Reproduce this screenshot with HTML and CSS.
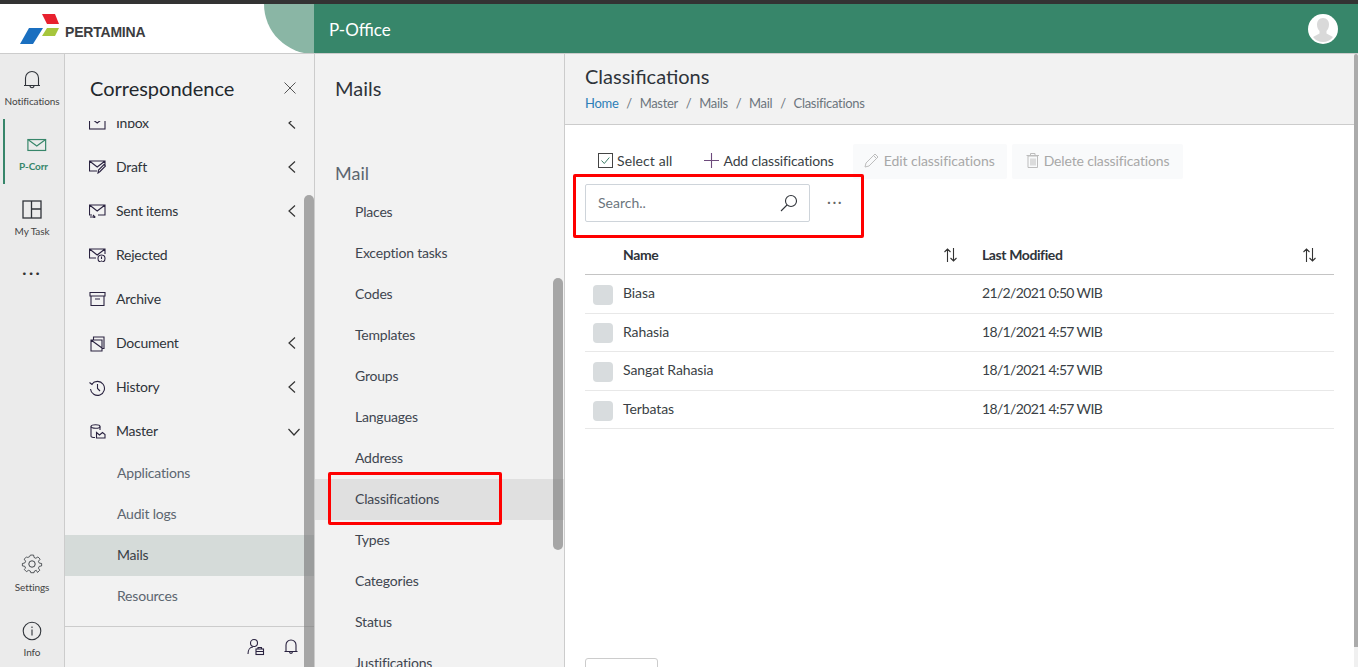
FILE: index.html
```html
<!doctype html>
<html lang="en">
  <head>
    <meta charset="UTF-8" />
    <meta name="viewport" content="width=device-width, initial-scale=1.0" />
    <title>P-Office</title>
    <link rel="stylesheet" href="styles.css">
  </head>

  <body>
    <div class="app">
      <header class="topbar">
        <div class="brand">
          <svg class="brand-logo" width="40" height="30" viewBox="0 0 40 30">
            <polygon points="22,0 35,0 39,10 27,10" fill="#e8212e" />
            <polygon points="9,14 23,14 13,30 0,30" fill="#1a6fc0" />
            <polygon points="27,14 39,14 35,22 22,22" fill="#a6c63c" />
          </svg>
          <span class="brand-name">PERTAMINA</span>
          <span class="brand-curve"></span>
        </div>
        <div class="appbar">
          <span class="app-name">P-Office</span>
          <span class="avatar">
            <svg width="30" height="30" viewBox="0 0 30 30">
              <path d="M15 4c-4 0-6 3-6 6.500 0 3 1 5 2.500 6.500v2.500L5 23c2.500 3.500 6 5 10 5s7.500-1.500 10-5l-6.500-3.500V17c1.500-1.500 2.500-3.500 2.500-6.500C21 7 19 4 15 4z" fill="#d9d9d9" />
            </svg>
          </span>
        </div>
      </header>

      <div class="body">
        <nav class="rail">
          <a class="rail-item">
            <svg width="18" height="20" viewBox="0 0 18 20" fill="none" stroke="#30343a" stroke-width="1.100">
              <path d="M2.500 15.500V8a6.500 6.500 0 0 1 13 0v7.500zM1 15.500h16M7 15.500c0 3 4 3 4 0" />
            </svg>
            <span>Notifications</span>
          </a>
          <a class="rail-item is-active">
            <svg width="20" height="14" viewBox="0 0 22 16" fill="none" stroke="#37866a" stroke-width="1.300">
              <rect x="1" y="2" width="19.500" height="12" />
              <path d="M1 2l9.750 7L20.500 2" />
            </svg>
            <span>P-Corr</span>
          </a>
          <a class="rail-item">
            <svg width="20" height="20" viewBox="0 0 20 20" fill="none" stroke="#30343a" stroke-width="1.300">
              <rect x="1" y="1" width="18" height="17" />
              <path d="M9.500 1v17M9.500 9H19" />
            </svg>
            <span>My Task</span>
          </a>
          <div class="rail-more">&middot;&middot;&middot;</div>
          <div class="rail-bottom">
            <a class="rail-item rail-settings">
              <svg width="22" height="22" viewBox="0 0 24 24" fill="none" stroke="#30343a" stroke-width="1">
                <circle cx="12" cy="12" r="3.500" />
                <path d="M10 2h4l.6 3 2.200 1 2.600-1.700 2.800 2.800L20 9.700l1 2.300 3 .5v3l-3 .6-1 2.200 1.700 2.600-2.800 2.800L17.300 21l-2.300 1-.5 2h-4l-.6-2-2.200-1-2.600 1.700-2.800-2.800L4 18.300 3 16l-3-.5v-3l3-.6 1-2.200-1.700-2.600 2.800-2.800L6.700 5 9 4z" transform="translate(1.500 .5) scale(.875)" />
              </svg>
              <span>Settings</span>
            </a>
            <a class="rail-item">
              <svg width="20" height="20" viewBox="0 0 20 20" fill="none" stroke="#30343a" stroke-width="1.100">
                <circle cx="10" cy="10" r="8.800" />
                <path d="M10 8.500v6M10 5.500v1.500" />
              </svg>
              <span>Info</span>
            </a>
          </div>
        </nav>

        <aside class="panel panel-menu">
          <div class="menu-head">
            <h2>Correspondence</h2>
            <svg width="12" height="12" viewBox="0 0 12 12" stroke="#555" stroke-width="1">
              <path d="M.5.500l11 11M11.500.500l-11 11" />
            </svg>
          </div>
          <div class="menu-scroll">
            <ul class="menu">
              <li class="menu-row">
                <svg class="menu-icon" width="17" height="14" viewBox="0 0 17 14" fill="none" stroke="#2a2340" stroke-width="1.100"><rect x=".5" y="1" width="15.500" height="12" /><path d="M.5 1l7.700 6L16 1" /></svg>
                Inbox<svg class="chev" width="8" height="12" viewBox="0 0 8 12" fill="none" stroke="#333" stroke-width="1.200"><path d="M7 .5L1 6l6 5.500" /></svg>
              </li>
              <li class="menu-row">
                <svg class="menu-icon" width="17" height="14" viewBox="0 0 17 14" fill="none" stroke="#2a2340" stroke-width="1.100"><path d="M8 11H.5V1h15.500v5M.5 1l7.700 6L16 1M9 13l.5-3L15 4.500l1.500 1.500-5.500 5.500z" /></svg>
                Draft<svg class="chev" width="8" height="12" viewBox="0 0 8 12" fill="none" stroke="#333" stroke-width="1.200"><path d="M7 .5L1 6l6 5.500" /></svg>
              </li>
              <li class="menu-row">
                <svg class="menu-icon" width="17" height="14" viewBox="0 0 17 14" fill="none" stroke="#2a2340" stroke-width="1.100"><path d="M3 11H.5V1h15.500v10H9M.5 1l7.700 6L16 1M1 13h5M4 11l2 2-2 2" /></svg>
                Sent items<svg class="chev" width="8" height="12" viewBox="0 0 8 12" fill="none" stroke="#333" stroke-width="1.200"><path d="M7 .5L1 6l6 5.500" /></svg>
              </li>
              <li class="menu-row">
                <svg class="menu-icon" width="17" height="14" viewBox="0 0 17 14" fill="none" stroke="#2a2340" stroke-width="1.100"><path d="M7 10H.5V1h15.500v5M.5 1l7.700 6L16 1" /><circle cx="12.500" cy="10.500" r="3.500" /><path d="M12.500 8.500v2.500M12.500 12v.5" /></svg>
                Rejected
              </li>
              <li class="menu-row">
                <svg class="menu-icon" width="17" height="14" viewBox="0 0 17 14" fill="none" stroke="#2a2340" stroke-width="1.100"><path d="M1 .5h15v3.500H1zM2 4v9.500h13V4M6 7h5" /></svg>
                Archive
              </li>
              <li class="menu-row">
                <svg class="menu-icon" width="17" height="16" viewBox="0 0 17 16" fill="none" stroke="#2a2340" stroke-width="1.100"><path d="M2 15V4h11v11zM4.500 4V1H15v11.500h-2M2 4l11 8" /></svg>
                Document<svg class="chev" width="8" height="12" viewBox="0 0 8 12" fill="none" stroke="#333" stroke-width="1.200"><path d="M7 .5L1 6l6 5.500" /></svg>
              </li>
              <li class="menu-row">
                <svg class="menu-icon" width="17" height="16" viewBox="0 0 17 16" fill="none" stroke="#2a2340" stroke-width="1.100"><path d="M3 4a7 7 0 1 1-1.500 5M.5 2.500L3 4.500l2-2.500M8.500 4v4.500l2.500 2.500" /></svg>
                History<svg class="chev" width="8" height="12" viewBox="0 0 8 12" fill="none" stroke="#333" stroke-width="1.200"><path d="M7 .5L1 6l6 5.500" /></svg>
              </li>
              <li class="menu-row">
                <svg class="menu-icon" width="17" height="15" viewBox="0 0 17 15" fill="none" stroke="#2a2340" stroke-width="1.100"><ellipse cx="6.500" cy="2.500" rx="4.500" ry="1.800" /><path d="M2 2.500V12c0 1 2 1.500 4 1.500M11 2.500V6M7.500 14V8.500l3 2.500 3-2.500 2.500 2v3.500z" /></svg>
                Master<svg class="chev chev-down" width="12" height="8" viewBox="0 0 12 8" fill="none" stroke="#333" stroke-width="1.200"><path d="M.5 1L6 7l5.500-6" /></svg>
              </li>
              <li class="menu-sub">Applications</li>
              <li class="menu-sub">Audit logs</li>
              <li class="menu-sub is-current">Mails</li>
              <li class="menu-sub">Resources</li>
            </ul>
          </div>
          <div class="menu-foot">
            <svg width="18" height="18" viewBox="0 0 18 18" fill="none" stroke="#2a2340" stroke-width="1.100">
              <circle cx="7" cy="5" r="3.500" />
              <path d="M1 16c0-4 2-7 5-7" />
              <rect x="9" y="11" width="7.500" height="5.500" />
              <path d="M11 11V9.500h3.500V11M9 13.500h7.500" />
            </svg>
            <svg width="14" height="16" viewBox="0 0 14 16" fill="none" stroke="#2a2340" stroke-width="1.100">
              <path d="M2 12.500V6a5 5 0 0 1 10 0v6.500zM.5 12.500h13M5.500 12.500c0 2.500 3 2.500 3 0" />
            </svg>
          </div>
          <div class="scroll-thumb thumb-menu"></div>
        </aside>

        <aside class="panel panel-sub">
          <h2 class="sub-title">Mails</h2>
          <div class="sub-label">Mail</div>
          <ul class="sub-list">
            <li>Places</li>
            <li>Exception tasks</li>
            <li>Codes</li>
            <li>Templates</li>
            <li>Groups</li>
            <li>Languages</li>
            <li>Address</li>
            <li class="is-current">Classifications</li>
            <li>Types</li>
            <li>Categories</li>
            <li>Status</li>
            <li>Justifications</li>
          </ul>
          <div class="scroll-thumb thumb-sub"></div>
        </aside>

        <main class="content">
          <div class="page-head">
            <h1>Classifications</h1>
            <div class="crumbs">
              <a>Home</a><i>/</i><span>Master</span><i>/</i><span>Mails</span><i>/</i><span>Mail</span><i>/</i><span>Clasifications</span>
            </div>
          </div>
          <div class="page-body">
            <div class="toolbar">
              <button class="tool tool-select">
                <svg width="15" height="15" viewBox="0 0 15 15" fill="none" stroke="#444" stroke-width="1">
                  <rect x=".5" y=".5" width="14" height="14" />
                  <path d="M3.500 7.500l2.800 3 5-6" stroke="#3a7d66" />
                </svg>
                Select all
              </button>
              <button class="tool tool-add">
                <svg width="15" height="15" viewBox="0 0 15 15" stroke="#6d4a7c" stroke-width="1.100">
                  <path d="M7.500 0v15M0 7.500h15" />
                </svg>
                Add classifications
              </button>
              <button class="tool tool-off tool-edit">
                <svg width="15" height="15" viewBox="0 0 15 15" fill="none" stroke="#bdbdbd" stroke-width="1">
                  <path d="M1 14l1-4L11 1l3 3-9 9zM9.500 2.500l3 3" />
                </svg>
                Edit classifications
              </button>
              <button class="tool tool-off tool-delete">
                <svg width="13" height="15" viewBox="0 0 13 15" fill="none" stroke="#bdbdbd" stroke-width="1">
                  <path d="M2 3h9.500v11.500H2zM.5 2.500h12.500M4.500 2.500V.5h4.500v2M5 5.500v7M7 5.500v7M9 5.500v7" />
                </svg>
                Delete classifications
              </button>
            </div>
            <div class="search-row">
              <div class="search">
                <span>Search..</span>
                <svg width="18" height="18" viewBox="0 0 18 18" fill="none" stroke="#30343a" stroke-width="1.100">
                  <circle cx="11" cy="7" r="5.500" />
                  <path d="M7 11l-6 6" />
                </svg>
              </div>
              <span class="search-more">&middot;&middot;&middot;</span>
            </div>
            <div class="table">
              <div class="table-head">
                <div class="col-name">Name<svg class="sort" width="13" height="14" viewBox="0 0 13 14" fill="none" stroke="#333" stroke-width="1.100"><path d="M3.500 14V1M.5 4l3-3 3 3M9.500 0v13M6.500 10l3 3 3-3" /></svg></div>
                <div class="col-date">Last Modified<svg class="sort" width="13" height="14" viewBox="0 0 13 14" fill="none" stroke="#333" stroke-width="1.100"><path d="M3.500 14V1M.5 4l3-3 3 3M9.500 0v13M6.500 10l3 3 3-3" /></svg></div>
              </div>
              <div class="table-row"><span class="check"></span><div class="col-name">Biasa</div><div class="col-date">21/2/2021 0:50 WIB</div></div>
              <div class="table-row"><span class="check"></span><div class="col-name">Rahasia</div><div class="col-date">18/1/2021 4:57 WIB</div></div>
              <div class="table-row"><span class="check"></span><div class="col-name">Sangat Rahasia</div><div class="col-date">18/1/2021 4:57 WIB</div></div>
              <div class="table-row"><span class="check"></span><div class="col-name">Terbatas</div><div class="col-date">18/1/2021 4:57 WIB</div></div>
            </div>
            <div class="pager-box"></div>
          </div>
          <div class="scroll-thumb thumb-main"></div>
        </main>
      </div>

      <!-- annotation boxes on the screenshot -->
      <div class="mark mark-nav"></div>
      <div class="mark mark-search"></div>
    </div>
  </body>
</html>
```

FILE: styles.css
```css
html,
body {
  margin: 0;
  padding: 0;
  height: 100%;
  overflow: hidden;
}
body {
  font-family: "Lato", "Noto Sans", sans-serif;
  font-size: 14px;
  color: #3a3f45;
  background-color: #fff;
}
ul {
  list-style: none;
  margin: 0;
  padding: 0;
}
h1,
h2 {
  margin: 0;
  font-weight: 400;
}
.app {
  position: relative;
  height: 667px;
  display: flex;
  flex-direction: column;
  border-top: 4px solid #333;
  box-sizing: border-box;
  overflow: hidden;
}

/* top bar */
.topbar {
  display: flex;
  height: 50px;
  flex: none;
  box-sizing: border-box;
  border-bottom: 1px solid #ccc;
}
.brand {
  position: relative;
  width: 314px;
  flex: none;
  display: flex;
  align-items: center;
  padding-left: 20px;
  box-sizing: border-box;
  background-color: #fff;
  overflow: hidden;
}
.brand-logo {
  flex: none;
  margin-top: 1px;
}
.brand-name {
  margin-left: 5px;
  margin-top: 7px;
  font-family: "Liberation Sans", sans-serif;
  font-size: 14px;
  font-weight: 700;
  letter-spacing: -.2px;
  color: #3c3c40;
}
.brand-curve {
  position: absolute;
  left: 264px;
  top: -50px;
  width: 100px;
  height: 100px;
  border-radius: 50%;
  background-color: #8ab6a5;
}
.appbar {
  flex: 1;
  display: flex;
  align-items: center;
  justify-content: space-between;
  padding: 0 20px 0 15px;
  background-color: #37866a;
  color: #fff;
}
.app-name {
  margin-top: 2px;
  font-size: 17px;
}
.avatar {
  width: 30px;
  height: 30px;
  border-radius: 50%;
  background-color: #fff;
  overflow: hidden;
}
.avatar svg {
  display: block;
}

.body {
  flex: 1;
  display: flex;
  min-height: 0;
}

/* icon rail */
.rail {
  width: 65px;
  flex: none;
  box-sizing: border-box;
  display: flex;
  flex-direction: column;
  padding-top: 15px;
  border-right: 1px solid #ccc;
  background-color: #ebebeb;
}
.rail-item {
  height: 65px;
  display: flex;
  flex-direction: column;
  align-items: center;
  gap: 4px;
  font-size: 10px;
  letter-spacing: -.1px;
  color: #444;
}
.rail-item svg {
  height: 22px;
}
.rail-item.is-active {
  height: 65px;
  margin-left: 3px;
  margin-right: 2px;
  padding-top: 15px;
  margin-top: -15px;
  margin-bottom: 15px;
  box-sizing: border-box;
  border-left: 2px solid #37866a;
  color: #37866a;
  font-weight: 700;
}
.is-active svg {
  margin-left: 6px;
}
.rail-more {
  margin-top: -3px;
  text-align: center;
  font-size: 18px;
  letter-spacing: 2px;
  color: #333;
}
.rail-bottom {
  margin-top: auto;
}
.rail-bottom .rail-item {
  height: 66px;
}
.rail-bottom .rail-settings {
  height: 67px;
  gap: 6px;
}
.rail-bottom .rail-item:last-child {
  height: 47px;
}

/* panels */
.panel {
  position: relative;
  width: 250px;
  flex: none;
  box-sizing: border-box;
  border-right: 1px solid #ccc;
  background-color: #f2f2f2;
}
.panel-menu {
  display: flex;
  flex-direction: column;
}
.menu-head {
  height: 67px;
  flex: none;
  display: flex;
  align-items: center;
  justify-content: space-between;
  padding: 1px 18px 0 25px;
  box-sizing: border-box;
}
.menu-head h2 {
  font-size: 20px;
  color: #23282d;
}
.menu-scroll {
  flex: 1;
  min-height: 0;
  overflow: hidden;
}
.menu {
  margin-top: -20px;
}
.menu-row {
  position: relative;
  height: 44px;
  display: flex;
  align-items: center;
  padding: 0 0 2px 51px;
  box-sizing: border-box;
  letter-spacing: -.25px;
  color: #2f343a;
}
.menu-icon {
  position: absolute;
  left: 24px;
  top: 15px;
}
.chev {
  position: absolute;
  left: 223px;
  top: 16px;
}
.chev-down {
  left: 223px;
  top: 19px;
}
.menu-sub {
  height: 41px;
  display: flex;
  align-items: center;
  padding: 0 0 2px 52px;
  box-sizing: border-box;
  letter-spacing: -.2px;
  color: #5c6670;
}
.menu-sub.is-current {
  background-color: #d5dbd9;
  color: #3a3f45;
}
.menu-foot {
  height: 41px;
  flex: none;
  display: flex;
  align-items: center;
  justify-content: flex-end;
  gap: 19px;
  padding-right: 16px;
  border-top: 1px solid #ccc;
  box-sizing: border-box;
}
.scroll-thumb {
  position: absolute;
  width: 10px;
  border-radius: 5px 5px 0 0;
  background-color: rgba(120, 120, 120, 0.62);
}
.thumb-menu {
  right: 0;
  top: 141px;
  bottom: 0;
}
.thumb-sub {
  right: 1px;
  top: 224px;
  height: 272px;
  border-radius: 5px;
}
.thumb-main {
  right: 0;
  top: 0;
  bottom: 0;
  width: 4px;
  border-radius: 2px 2px 0 0;
  border-bottom: 20px solid #f0f0f0;
  background-clip: padding-box;
  background-color: #ababab;
}
.sub-title {
  padding: 22px 0 0 20px;
  font-size: 20px;
  color: #2f343a;
}
.sub-label {
  margin-top: 62px;
  padding-left: 20px;
  font-size: 18px;
  color: #5c6670;
}
.sub-list {
  margin-top: 8px;
}
.sub-list li {
  height: 41px;
  display: flex;
  align-items: center;
  padding: 0 0 2px 40px;
  box-sizing: border-box;
  letter-spacing: -.2px;
  color: #3f4650;
}
.sub-list li.is-current {
  background-color: #e0e0e0;
}

/* main area */
.content {
  position: relative;
  flex: 1;
  min-width: 0;
  overflow: hidden;
}
.page-head {
  height: 71px;
  padding: 10px 20px 0;
  box-sizing: border-box;
  border-bottom: 1px solid #ccc;
  background-color: #f2f2f2;
}
.page-head h1 {
  font-size: 20px;
  line-height: 24px;
  color: #2f343a;
}
.crumbs {
  margin-top: 7px;
  font-size: 13px;
  letter-spacing: -.3px;
  color: #6c757d;
}
.crumbs a {
  color: #2d7fb8;
}
.crumbs i {
  font-style: normal;
  margin: 0 7.800px;
}
.page-body {
  padding: 19px 24px 0 20px;
}
.toolbar {
  display: flex;
  height: 35px;
  align-items: stretch;
}
.tool {
  display: flex;
  align-items: center;
  gap: 5px;
  border: 0;
  padding: 0 0 2px;
  background: none;
  font: inherit;
  color: #3a3f45;
}
.tool-select {
  margin-left: 13px;
  gap: 4px;
  letter-spacing: .1px;
}
.tool-add {
  margin-left: 31px;
  letter-spacing: -.15px;
}
.tool-off {
  color: #a8a8a8;
  background-color: #f9fafb;
  border-radius: 2px;
}
.tool-edit {
  margin-left: 19px;
  width: 154px;
  padding-left: 11px;
  box-sizing: border-box;
  letter-spacing: -.05px;
}
.tool-delete {
  margin-left: 5px;
  width: 171px;
  padding-left: 14px;
  box-sizing: border-box;
  letter-spacing: -.15px;
}
.search-row {
  display: flex;
  align-items: center;
  margin-top: 5px;
}
.search {
  width: 225px;
  height: 38px;
  box-sizing: border-box;
  display: flex;
  align-items: center;
  justify-content: space-between;
  padding: 0 11px 0 12px;
  border: 1px solid #ced4da;
  border-radius: 2px;
  color: #6c757d;
}
.search span {
  margin-top: -2px;
}
.search-more {
  margin: -5px 0 0 17px;
  font-size: 15px;
  letter-spacing: 1.500px;
  color: #666;
}
.table {
  margin-top: 13px;
  width: 749px;
}
.table-head,
.table-row {
  display: flex;
  align-items: center;
  box-sizing: border-box;
}
.table-head {
  height: 40px;
  padding-left: 38px;
  border-bottom: 1px solid #c4c4c4;
  font-weight: 700;
  letter-spacing: -.4px;
  color: #2f343a;
}
.table-row {
  height: 38.600px;
  padding: 0 0 2px 8px;
  border-bottom: 1px solid #e8e8e8;
  letter-spacing: -.1px;
}
.table-row .col-date {
  letter-spacing: -.65px;
}
.check {
  flex: none;
  width: 20px;
  height: 20px;
  margin: 4px 10px 0 0;
  border-radius: 4px;
  background-color: #d8dcde;
}
.col-name {
  position: relative;
  width: 359px;
  flex: none;
}
.col-date {
  position: relative;
  flex: 1;
}
.sort {
  position: absolute;
  top: 2px;
  right: 25px;
}
.col-date .sort {
  right: 18px;
}
.pager-box {
  position: absolute;
  left: 20px;
  bottom: -21px;
  width: 73px;
  height: 30px;
  box-sizing: border-box;
  border: 1px solid #ccc;
  border-radius: 3px;
}

/* red annotation boxes */
.mark {
  position: absolute;
  box-sizing: border-box;
  border: 3px solid #f00;
  border-radius: 2px;
}
.mark-nav {
  left: 328px;
  top: 468px;
  width: 174px;
  height: 53px;
}
.mark-search {
  left: 573px;
  top: 170px;
  width: 291px;
  height: 64px;
}
```
